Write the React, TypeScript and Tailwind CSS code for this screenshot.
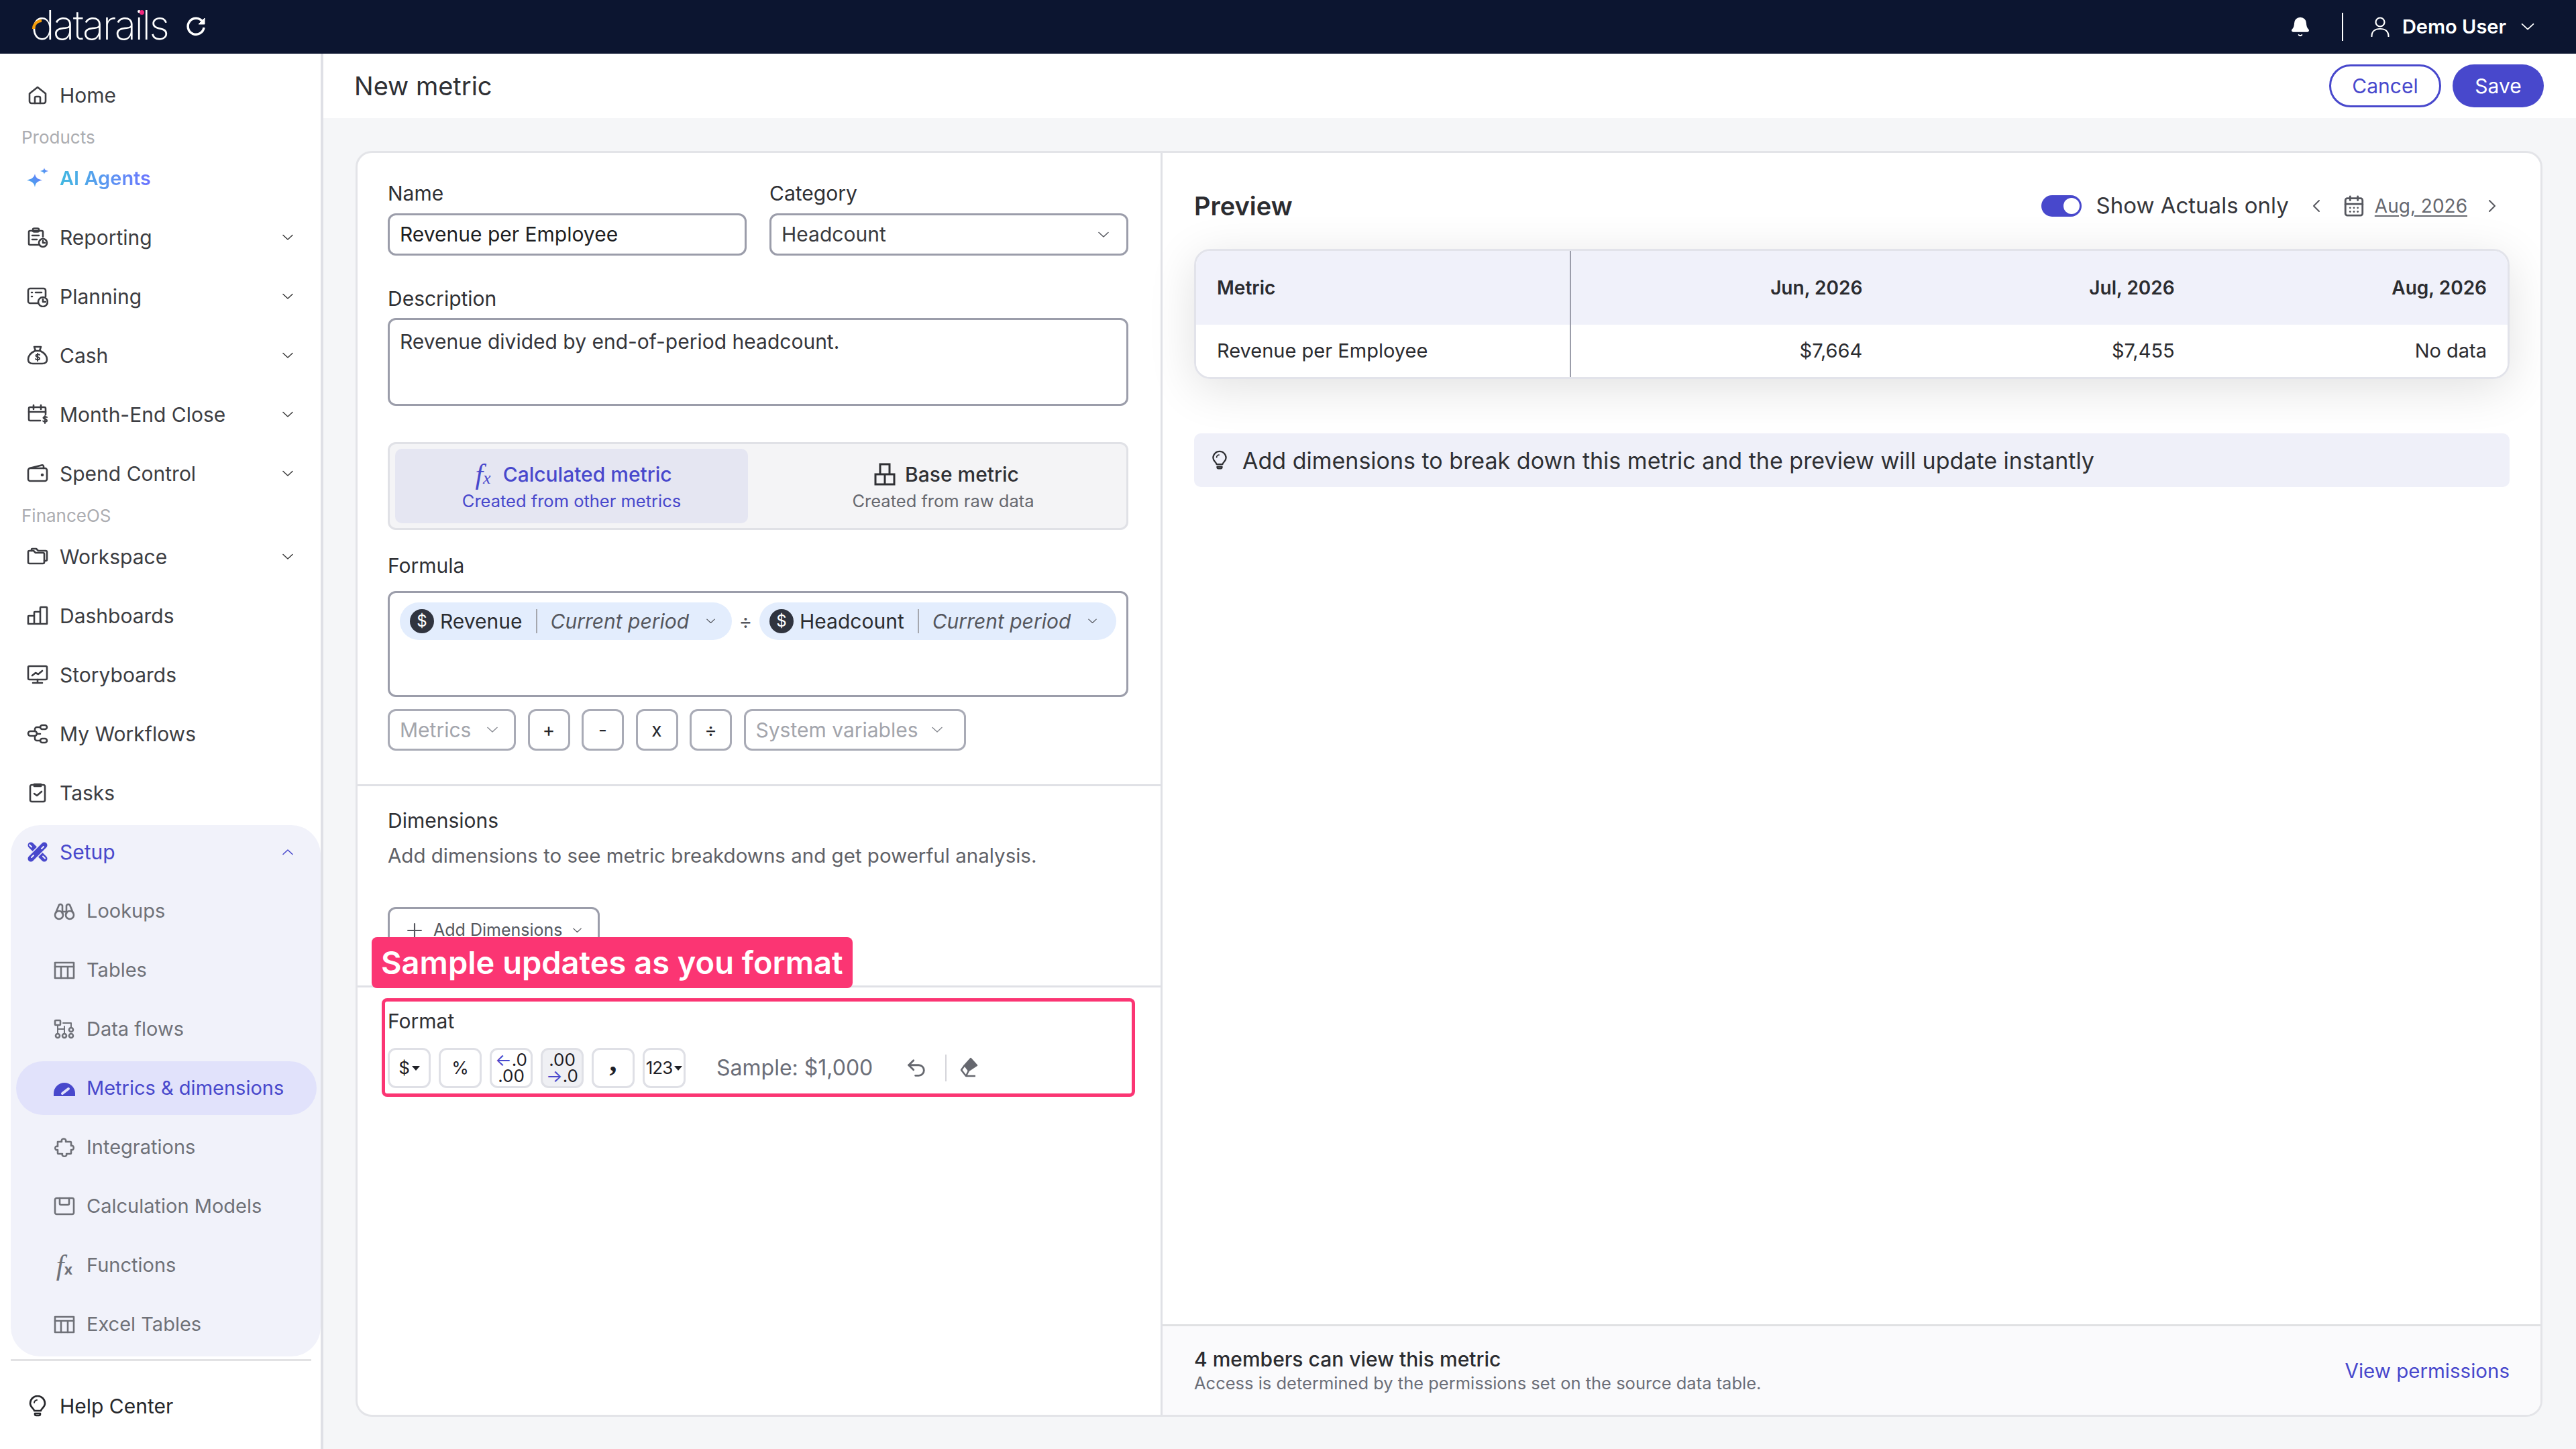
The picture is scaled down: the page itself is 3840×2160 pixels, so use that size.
import type { ReactNode } from "react";
import { Bell, CalendarDays, ChevronLeft, ChevronRight, Plus, Undo2 } from "lucide-react";

type IconProps = { className?: string };

function Svg({ className = "w-8 h-8", children }: IconProps & { children: ReactNode }) {
  return (
    <svg viewBox="0 0 32 32" fill="none" stroke="currentColor" strokeWidth="2.6" strokeLinecap="round" strokeLinejoin="round" className={className}>
      {children}
    </svg>
  );
}

const HomeIcon = () => (
  <Svg>
    <path d="M4 13.5 16 4l12 9.5V25a3 3 0 0 1-3 3H7a3 3 0 0 1-3-3Z" />
    <path d="M12 28v-8a2 2 0 0 1 2-2h4a2 2 0 0 1 2 2v8" />
  </Svg>
);
const ReportIcon = () => (
  <Svg>
    <path d="M19 27H5a2 2 0 0 1-2-2V8a2 2 0 0 1 2-2h17a2 2 0 0 1 2 2v7" />
    <rect x="9" y="2.5" width="9" height="5" rx="2" />
    <path d="M8 13h10M8 19h7" />
    <circle cx="24" cy="24" r="6" />
    <path d="M24 21v3h3" />
  </Svg>
);
const PlanIcon = () => (
  <Svg>
    <path d="M16 26H5a3 3 0 0 1-3-3V7a3 3 0 0 1 3-3h20a3 3 0 0 1 3 3v9" />
    <path d="M7 10h1M13 10h9M7 16h1" />
    <circle cx="24" cy="24" r="7" />
    <path d="M24 20v4h4" />
  </Svg>
);
const CashIcon = () => (
  <Svg>
    <path d="M11 3h10l-2 6h-6Z" />
    <path d="M12 9C6 12 2 17 2 22c0 4 3 6 7 6h14c4 0 7-2 7-6 0-5-4-10-10-13" />
    <path d="M19 15c-1-1-5-1.500-5.500 1 0 3 5.500 1.500 5.500 4.500 0 2.500-5 2-6 .5M16 13v11" strokeWidth="2" />
  </Svg>
);
const CloseIcon = () => (
  <Svg>
    <path d="M20 25H5a2 2 0 0 1-2-2V7a2 2 0 0 1 2-2h21a2 2 0 0 1 2 2v9" />
    <path d="M3 12h25M10 2v6M21 2v6" />
    <path d="M30 20c-1-1-5-1.500-5.500.5 0 3 5.500 1.500 5.500 4.500 0 2.500-5 2-6 .5M27 18v11" strokeWidth="2" />
  </Svg>
);
const WalletIcon = () => (
  <Svg>
    <rect x="2" y="8" width="28" height="19" rx="3" />
    <path d="M4 8 22 3.500c2-.5 3 .5 3 2V8" />
    <circle cx="23" cy="18" r="1" fill="currentColor" />
  </Svg>
);
const FolderIcon = () => (
  <Svg>
    <path d="M2 9a2 2 0 0 1 2-2h6l3 3h11a2 2 0 0 1 2 2v12a2 2 0 0 1-2 2H4a2 2 0 0 1-2-2Z" />
    <path d="M7 7V5a1 1 0 0 1 1-1h6l3 3h11a2 2 0 0 1 2 2v11a2 2 0 0 1-2 2h-2" />
  </Svg>
);
const BarsIcon = () => (
  <Svg>
    <path d="M2 28V17a1 1 0 0 1 1-1h8M11 28V11a1 1 0 0 1 1-1h8M20 28V4a1 1 0 0 1 1-1h8a1 1 0 0 1 1 1v24ZM2 28h28" />
  </Svg>
);
const BoardIcon = () => (
  <Svg>
    <rect x="2" y="3" width="28" height="20" rx="2" />
    <path d="M16 23v5M9 28h14M8 17l5-4 4 2 6-5" />
  </Svg>
);
const FlowIcon = () => (
  <Svg>
    <rect x="20" y="3" width="10" height="6" rx="3" />
    <rect x="20" y="23" width="10" height="6" rx="3" />
    <rect x="2" y="12" width="13" height="7" rx="3.500" />
    <path d="M20 6h-5a3 3 0 0 0-3 3v3M15 16h5M20 26h-5a3 3 0 0 1-3-3v-4" />
  </Svg>
);
const TaskIcon = () => (
  <Svg>
    <rect x="5" y="4" width="22" height="25" rx="2.500" />
    <path d="M11 3h10v3H11Z" fill="currentColor" />
    <path d="m11 17 4 3 7-6" />
  </Svg>
);
const SetupIcon = () => (
  <svg viewBox="0 0 32 32" className="h-8 w-8" fill="none" strokeLinecap="round">
    <path d="M6 6 26 26" stroke="#4848cc" strokeWidth="9" />
    <path d="M26 6 6 26" stroke="#f1f2fa" strokeWidth="12" />
    <path d="M26 6 6 26" stroke="#4848cc" strokeWidth="9" />
    <path d="M4 5.500 7 8.500M24 22.500 27 25.500M25 8 22 11M10 21 7 24" stroke="#f1f2fa" strokeWidth="2" />
  </svg>
);
const BinocularsIcon = () => (
  <Svg>
    <circle cx="8" cy="22" r="6" />
    <circle cx="24" cy="22" r="6" />
    <path d="M3 19 8 7a3 3 0 0 1 5 1v12M29 19 24 7a3 3 0 0 0-5 1v12M13 17h6" />
  </Svg>
);
const TableIcon = () => (
  <Svg>
    <rect x="2" y="5" width="28" height="23" />
    <path d="M2 11h28M11 11v17M21 11v17" />
  </Svg>
);
const DataFlowIcon = () => (
  <Svg>
    <rect x="2" y="3" width="8" height="7" rx="1" />
    <circle cx="6" cy="26" r="3" />
    <circle cx="16" cy="26" r="3" />
    <circle cx="26" cy="26" r="3" />
    <circle cx="26" cy="17" r="3" />
    <path d="M6 10v13M6 16h10v7M14 7h12v7M16 16v-4" strokeWidth="2" />
  </Svg>
);
const GaugeIcon = () => (
  <svg viewBox="0 0 32 32" className="h-8 w-8">
    <path d="M0 28v-4a16 16 0 0 1 32 0v4Z" fill="#4848cc" />
    <path d="m13 24 9-7" stroke="#e1e2fb" strokeWidth="4" strokeLinecap="round" />
  </svg>
);
const PuzzleIcon = () => (
  <Svg>
    <path d="M6 8h6c-2-6 8-6 6 0h7a1 1 0 0 1 1 1v5c5-2 5 8 0 6v5a1 1 0 0 1-1 1h-6c2 5-8 5-6 0H7a1 1 0 0 1-1-1v-5c-5 2-5-7 0-5Z" />
  </Svg>
);
const ModelIcon = () => (
  <Svg>
    <rect x="2" y="4" width="28" height="24" rx="2.500" />
    <path d="M9 4v8a2 2 0 0 0 2 2h10a2 2 0 0 0 2-2V4" />
  </Svg>
);
const BulbIcon = ({ className = "w-8 h-8" }: IconProps) => (
  <Svg className={className}>
    <path d="M11 23c0-3-6-5-6-11a11 11 0 0 1 22 0c0 6-6 8-6 11Z" />
    <path d="M12 27h8v1a2 2 0 0 1-2 2h-4a2 2 0 0 1-2-2Z" />
    <path d="M11 11c0-2 2-4 4-4" strokeWidth="2" />
  </Svg>
);

function Fx({ className = "", subClass = "" }: { className?: string; subClass?: string }) {
  return (
    <span className={`inline-flex items-baseline font-['Liberation_Serif',serif] italic leading-none ${className}`}>
      f<span className={subClass}>x</span>
    </span>
  );
}

function Chev({ up = false, className = "text-[#3a3a3a]" }: { up?: boolean; className?: string }) {
  return (
    <svg viewBox="0 0 16 10" fill="none" stroke="currentColor" strokeWidth="1.500" strokeLinecap="round" strokeLinejoin="round" className={`h-[10px] w-4 shrink-0 ${className}`}>
      <path d={up ? "M1 8.500 8 2l7 6.500" : "M1 1.500 8 8l7-6.500"} />
    </svg>
  );
}

function NavRow({ icon, label, expand }: { icon: ReactNode; label: string; expand?: boolean }) {
  return (
    <div className="flex h-[88px] items-center pl-[40px] pr-[41px] text-[#3c3d42]">
      <span className="flex w-8 justify-center">{icon}</span>
      <span className="ml-[17px] flex-1 text-[30px]">{label}</span>
      {expand && <Chev />}
    </div>
  );
}

function SubRow({ icon, label, active }: { icon: ReactNode; label: string; active?: boolean }) {
  return (
    <div className={`mx-2 my-1 flex h-[80px] items-center rounded-[40px] pl-[56px] ${active ? "w-[448px] bg-[#e1e2fb] text-[#4848cc]" : "text-[#6f7178]"}`}>
      <span className="flex w-8 justify-center">{icon}</span>
      <span className="ml-[17px] text-[29px]">{label}</span>
    </div>
  );
}

function SectionLabel({ children }: { children: ReactNode }) {
  return <div className="flex h-[36px] items-center pl-[32px] text-[26px] text-[#acadb1]">{children}</div>;
}

function Sidebar() {
  return (
    <aside className="flex w-[482px] shrink-0 flex-col border-r-4 border-[#dfe0e6] bg-white pt-[18px]">
      <NavRow icon={<HomeIcon />} label="Home" />
      <SectionLabel>Products</SectionLabel>
      <div className="flex h-[88px] items-center pl-[40px]">
        <svg viewBox="0 0 32 32" className="h-8 w-8">
          <defs>
            <linearGradient id="spark" x1="0" x2="1" y1="1" y2="0">
              <stop offset="0" stopColor="#3fb4e6" />
              <stop offset="1" stopColor="#6b73ff" />
            </linearGradient>
          </defs>
          <path d="M12 9c1 5 3 8 11 9.500-8 2-10 4.500-11 10.500-1-6-4-8.500-12-10.500C8 17 11 14 12 9Z" fill="url(#spark)" />
          <path d="M26 0c.5 3 2 4 6 5-4 1-5.500 2-6 5-.5-3-2-4-6-5 4-1 5.500-2 6-5Z" fill="url(#spark)" />
        </svg>
        <span className="ml-[17px] bg-gradient-to-r from-[#3fb8e0] to-[#6b73ff] bg-clip-text text-[29px] font-semibold text-transparent">AI Agents</span>
      </div>
      <NavRow icon={<ReportIcon />} label="Reporting" expand />
      <NavRow icon={<PlanIcon />} label="Planning" expand />
      <NavRow icon={<CashIcon />} label="Cash" expand />
      <NavRow icon={<CloseIcon />} label="Month-End Close" expand />
      <NavRow icon={<WalletIcon />} label="Spend Control" expand />
      <SectionLabel>FinanceOS</SectionLabel>
      <NavRow icon={<FolderIcon />} label="Workspace" expand />
      <NavRow icon={<BarsIcon />} label="Dashboards" />
      <NavRow icon={<BoardIcon />} label="Storyboards" />
      <NavRow icon={<FlowIcon />} label="My Workflows" />
      <NavRow icon={<TaskIcon />} label="Tasks" />

      <div className="ml-4 mt-1 flex flex-col rounded-[44px] bg-[#f1f2fa] pb-1">
        <div className="flex h-[84px] items-center pb-1 pl-[24px] pr-[41px] text-[#4848cc]">
          <SetupIcon />
          <span className="ml-[17px] flex-1 text-[30px]">Setup</span>
          <Chev up className="text-[#4848cc]" />
        </div>
        <SubRow icon={<BinocularsIcon />} label="Lookups" />
        <SubRow icon={<TableIcon />} label="Tables" />
        <SubRow icon={<DataFlowIcon />} label="Data flows" />
        <SubRow icon={<GaugeIcon />} label="Metrics & dimensions" active />
        <SubRow icon={<PuzzleIcon />} label="Integrations" />
        <SubRow icon={<ModelIcon />} label="Calculation Models" />
        <SubRow icon={<Fx className="text-[42px]" subClass="font-['Inter',sans-serif] text-[22px] font-bold not-italic" />} label="Functions" />
        <SubRow icon={<TableIcon />} label="Excel Tables" />
      </div>
      <div className="ml-4 mt-1 h-[3px] w-[448px] bg-[#e2e2e4]" />
      <div className="mt-[23px] flex h-[88px] items-center pl-[40px] text-[#26272b]">
        <BulbIcon />
        <span className="ml-[17px] text-[30px]">Help Center</span>
      </div>
    </aside>
  );
}

function TopBar() {
  return (
    <header className="flex h-[80px] shrink-0 items-center bg-[#0c1530] pl-[46px] pr-[62px] text-white">
      <div className="relative -mt-[6px] text-[60px] font-extralight leading-none tracking-[-2.5px]">
        datarails
        <span className="absolute left-[162px] top-[8px] h-[7px] w-[7px] rounded-full bg-[#f0277c]" />
        <span className="absolute left-[2px] top-[22px] h-[14px] w-[14px] rounded-tl-full border-l-[4px] border-t-[4px] border-[#f59e0b]" />
      </div>
      <svg viewBox="0 0 32 32" fill="none" stroke="currentColor" strokeWidth="3.500" className="ml-[26px] h-[32px] w-[32px]">
        <path d="M26 8.500A12 12 0 1 0 28 17" />
        <path d="M29 3v9h-9z" fill="currentColor" strokeWidth="1" />
      </svg>
      <div className="flex-1" />
      <Bell className="h-[36px] w-[32px]" fill="currentColor" strokeWidth={1.5} />
      <div className="ml-[46px] h-[42px] w-[2px] bg-white" />
      <svg viewBox="0 0 28 30" fill="none" stroke="currentColor" strokeWidth="2.200" strokeLinecap="round" className="ml-[41px] h-[30px] w-[28px]">
        <circle cx="14" cy="8" r="6.500" />
        <path d="M1.500 29c0-7 5-11 12.500-11s12.500 4 12.500 11" />
      </svg>
      <span className="ml-[19px] text-[29px] font-semibold">Demo User</span>
      <Chev className="ml-[22px] h-[12px] w-5 text-white" />
    </header>
  );
}

function Label({ children, className = "" }: { children: ReactNode; className?: string }) {
  return <div className={`text-[30px] leading-[36px] text-[#2f3034] ${className}`}>{children}</div>;
}

function DollarDot() {
  return <span className="flex h-[36px] w-[36px] shrink-0 items-center justify-center rounded-full bg-[#30343f] text-[24px] text-white">$</span>;
}

function Chip({ name, w }: { name: string; w: string }) {
  return (
    <div className={`flex h-[56px] items-center rounded-[28px] bg-[#e3edfd] pl-[15px] ${w}`}>
      <DollarDot />
      <span className="ml-[9px] text-[30px] text-[#2c2d31]">{name}</span>
      <span className="ml-[20px] h-[36px] w-[2px] bg-[#a5a7ae]" />
      <span className="ml-[20px] text-[30px] italic text-[#55575e]">Current period</span>
      <Chev className="ml-[26px] h-[8px] w-[13px] text-[#55575e]" />
    </div>
  );
}

function OpBtn({ children }: { children: ReactNode }) {
  return <div className="flex h-[62px] w-[63px] items-center justify-center rounded-[12px] border-[3px] border-[#a9abb6] text-[28px] text-[#26272b]">{children}</div>;
}

function FmtBtn({ children, on }: { children: ReactNode; on?: boolean }) {
  return <div className={`flex h-[60px] w-[64px] flex-col items-center justify-center rounded-[12px] border-[3px] border-[#dfe0e6] text-[26px] leading-[24px] text-[#1f2026] ${on ? "bg-[#eff0f4]" : "bg-white"}`}>{children}</div>;
}

function Caret() {
  return <span className="ml-[3px] h-0 w-0 border-x-[6px] border-t-[7px] border-x-transparent border-t-[#1f2026]" />;
}

function LeftPane() {
  return (
    <section className="relative flex w-[1200px] shrink-0 flex-col border-r-[3px] border-[#e0e1e6]">
      <div className="flex flex-col pl-[45px] pr-[48px] pt-[42px]">
        <div className="flex gap-[34px]">
          <div className="flex-1">
            <Label>Name</Label>
            <div className="mt-[12px] flex h-[63px] items-center rounded-[12px] border-[3px] border-[#9b9daa] px-[15px] text-[30px] text-[#1d1e22]">Revenue per Employee</div>
          </div>
          <div className="flex-1">
            <Label>Category</Label>
            <div className="mt-[12px] flex h-[63px] items-center justify-between rounded-[12px] border-[3px] border-[#9b9daa] pl-[15px] pr-[26px] text-[30px] text-[#3a3b40]">
              Headcount
              <Chev className="h-[10px] w-[16px] text-[#55575e]" />
            </div>
          </div>
        </div>
        <Label className="mt-[46px]">Description</Label>
        <div className="mt-[11px] h-[131px] rounded-[12px] border-[3px] border-[#9b9daa] px-[15px] pt-[14px] text-[30px] leading-[36px] text-[#35363b]">Revenue divided by end-of-period headcount.</div>

        <div className="mt-[54px] flex h-[131px] rounded-[12px] border-[3px] border-[#e0e1e6] bg-[#f4f4f6] py-[7px] pl-[8px]">
          <div className="flex w-[526px] flex-col items-center justify-center rounded-[10px] bg-[#e5e6f2] text-[#4848cc]">
            <div className="flex items-center gap-[18px] pl-[6px] text-[30px] font-medium leading-[42px]">
              <Fx className="text-[42px]" subClass="text-[26px]" />
              Calculated metric
            </div>
            <div className="mt-[3px] text-[25.5px] leading-[32px]">Created from other metrics</div>
          </div>
          <div className="flex flex-1 flex-col items-center justify-center pl-[18px]">
            <div className="flex items-center gap-[14px] pl-[10px] text-[30px] font-medium leading-[42px] text-[#2f3034]">
              <svg viewBox="0 0 32 34" fill="none" stroke="currentColor" strokeWidth="3" className="h-[34px] w-[32px]">
                <path d="M2 17h28v15H2ZM16 17v15M9 2h14v15H9Z" />
              </svg>
              Base metric
            </div>
            <div className="mt-[3px] text-[25.5px] leading-[32px] text-[#66686f]">Created from raw data</div>
          </div>
        </div>

        <Label className="mt-[35px]">Formula</Label>
        <div className="mt-[20px] h-[158px] rounded-[12px] border-[3px] border-[#9b9daa] pl-[15px] pt-[14px]">
          <div className="flex items-center">
            <Chip name="Revenue" w="w-[495px]" />
            <span className="w-[41px] text-center text-[30px] text-[#55575e]">÷</span>
            <Chip name="Headcount" w="w-[532px]" />
          </div>
        </div>

        <div className="mt-[18px] flex gap-[17.5px] text-[#a3a5ac]">
          <div className="flex h-[62px] w-[191px] items-center rounded-[12px] border-[3px] border-[#a9abb6] pl-[15px] text-[30px]">
            Metrics
            <Chev className="ml-[24px] text-[#8b8d95]" />
          </div>
          <OpBtn>+</OpBtn>
          <OpBtn>-</OpBtn>
          <OpBtn>x</OpBtn>
          <OpBtn>÷</OpBtn>
          <div className="flex h-[62px] w-[331px] items-center rounded-[12px] border-[3px] border-[#a9abb6] pl-[15px] text-[30px]">
            System variables
            <Chev className="ml-[20px] text-[#8b8d95]" />
          </div>
        </div>
      </div>

      <div className="mt-[50px] h-[3px] bg-[#e0e1e6]" />

      <div className="flex h-[297px] flex-col px-[45px] pt-[33px]">
        <Label>Dimensions</Label>
        <div className="mt-[16px] text-[29.5px] leading-[36px] text-[#5f6167]">Add dimensions to see metric breakdowns and get powerful analysis.</div>
        <div className="mt-[59px] flex h-[60px] w-[316px] items-center rounded-[12px] border-[3px] border-[#9b9daa] pl-[20px] pt-[10px] text-[25px] text-[#55575e]">
          <Plus className="h-[34px] w-[34px]" strokeWidth={1.5} />
          <span className="ml-[11px]">Add Dimensions</span>
          <Chev className="ml-[16px] h-[8px] w-[13px] text-[#55575e]" />
        </div>
      </div>
      <div className="h-[3px] bg-[#e0e1e6]" />

      <div className="px-[45px] pt-[32px]">
        <Label>Format</Label>
        <div className="mt-[22px] flex items-center">
          <div className="flex gap-[12px]">
            <FmtBtn>
              <span className="flex items-center">$<Caret /></span>
            </FmtBtn>
            <FmtBtn>%</FmtBtn>
            <FmtBtn>
              <span><span className="text-[#4848cc]">←</span>.0</span>
              <span>.00</span>
            </FmtBtn>
            <FmtBtn on>
              <span>.00</span>
              <span><span className="text-[#4848cc]">→</span>.0</span>
            </FmtBtn>
            <FmtBtn>
              <span className="-mt-[18px] font-['Liberation_Serif',serif] text-[44px] font-bold leading-[44px]">,</span>
            </FmtBtn>
            <FmtBtn>
              <span className="flex items-center tracking-[-1px]">123<Caret /></span>
            </FmtBtn>
          </div>
          <span className="ml-[46px] text-[32px] text-[#6b6e78]">Sample: $1,000</span>
          <Undo2 className="ml-[48px] h-[38px] w-[34px] text-[#66686f]" strokeWidth={2} />
          <span className="ml-[26px] h-[40px] w-[2px] bg-[#d4d5da]" />
          <svg viewBox="0 0 28 32" className="ml-[20px] h-[32px] w-[28px] text-[#66686f]" fill="none" stroke="currentColor" strokeWidth="2.500" strokeLinejoin="round">
            <path d="M16 2 25 12 13 20 7 12Z" fill="currentColor" />
            <path d="M7 12 2 19l7 9h14M13 20l-4 8" />
          </svg>
        </div>
      </div>

      {/* 강조 오버레이 */}
      <div className="absolute left-[36px] top-[1260px] h-[147px] w-[1123px] rounded-[8px] border-[5px] border-[#fb3573]" />
      <div className="absolute left-[21px] top-[1169px] rounded-[8px] bg-[#fb3573] px-[14px] py-[8px] text-[47px] font-semibold leading-[60px] text-white">Sample updates as you format</div>
    </section>
  );
}

function Cell({ children, head, right, first }: { children: ReactNode; head?: boolean; right?: boolean; first?: boolean }) {
  return (
    <div className={`flex items-center px-[31px] text-[#2b2c30] ${head ? "h-[110px] bg-[#f0f1fa] text-[28px] font-semibold" : "h-[78px] bg-white text-[29px]"} ${right ? "justify-end" : ""} ${first ? "border-r-2 border-[#9b9daa]" : ""}`}>
      {children}
    </div>
  );
}

function RightPane() {
  return (
    <section className="flex min-w-0 flex-1 flex-col">
      <div className="flex-1 pl-[47px] pr-[46px] pt-[51px]">
        <div className="flex h-[56px] items-center">
          <h2 className="flex-1 text-[38px] font-semibold text-[#2b2c30]">Preview</h2>
          <span className="relative h-[32px] w-[60px] rounded-full bg-[#4848cc]">
            <span className="absolute right-[3px] top-[4px] h-[24px] w-[24px] rounded-full bg-white" />
          </span>
          <span className="ml-[22px] text-[33px] text-[#35363b]">Show Actuals only</span>
          <ChevronLeft className="ml-[25px] h-[32px] w-[32px] text-[#55575e]" strokeWidth={1.5} />
          <CalendarDays className="ml-[23px] h-[36px] w-[34px] text-[#55575e]" strokeWidth={2} />
          <span className="ml-[14px] text-[28px] text-[#66686f] underline underline-offset-4">Aug, 2026</span>
          <ChevronRight className="ml-[21px] mr-[10px] h-[32px] w-[32px] text-[#55575e]" strokeWidth={1.5} />
        </div>

        <div className="mt-[36px] grid grid-cols-[559px_1fr_1fr_1fr] overflow-hidden rounded-[24px] border-[3px] border-[#e2e3ea] shadow-[0_14px_70px_rgba(0,0,0,0.12)]">
          <Cell head first>Metric</Cell>
          <Cell head right>Jun, 2026</Cell>
          <Cell head right>Jul, 2026</Cell>
          <Cell head right>Aug, 2026</Cell>
          <Cell first>Revenue per Employee</Cell>
          <Cell right>$7,664</Cell>
          <Cell right>$7,455</Cell>
          <Cell right>No data</Cell>
        </div>

        <div className="mt-[81px] flex h-[80px] items-center rounded-[10px] bg-[#eff0f9] pl-[24px] text-[#2f3034]">
          <BulbIcon className="h-[32px] w-[28px]" />
          <span className="ml-[20px] text-[34px]">Add dimensions to break down this metric and the preview will update instantly</span>
        </div>
      </div>

      <div className="flex h-[135px] items-center justify-between border-t-[3px] border-[#e0e1e3] bg-[#fafafc] pl-[47px] pr-[46px]">
        <div>
          <div className="text-[30px] font-medium leading-[38px] text-[#2b2c30]">4 members can view this metric</div>
          <div className="text-[25.5px] leading-[34px] text-[#6b6e78]">Access is determined by the permissions set on the source data table.</div>
        </div>
        <span className="text-[29.5px] text-[#4848cc]">View permissions</span>
      </div>
    </section>
  );
}

export default function App() {
  return (
    <div className="flex h-[2160px] w-[3840px] flex-col overflow-hidden bg-[#f5f6f8] font-['Inter','Liberation_Sans',sans-serif]">
      <TopBar />
      <div className="flex min-h-0 flex-1">
        <Sidebar />
        <main className="flex min-w-0 flex-1 flex-col">
          <div className="flex h-[96px] shrink-0 items-center bg-white pl-[46px] pr-[48px]">
            <h1 className="flex-1 text-[38px] text-[#2f3034]">New metric</h1>
            <button className="h-[64px] w-[167px] rounded-full border-[3px] border-[#4848cc] bg-white text-[30px] text-[#4848cc]">Cancel</button>
            <button className="ml-[17px] h-[64px] w-[136px] rounded-full bg-[#4848cc] text-[30px] text-white">Save</button>
          </div>
          <div className="mb-[48px] ml-[48px] mr-[50px] mt-[49px] flex min-h-0 flex-1 overflow-hidden rounded-[24px] border-[3px] border-[#e3e4e8] bg-white">
            <LeftPane />
            <RightPane />
          </div>
        </main>
      </div>
    </div>
  );
}
